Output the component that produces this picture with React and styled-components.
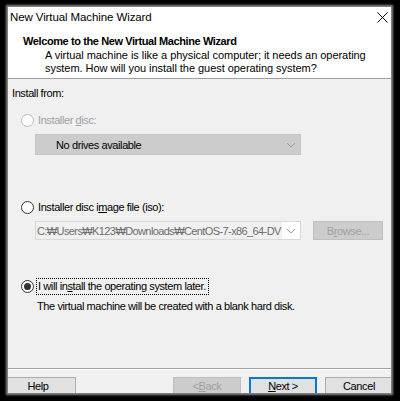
import styled, { createGlobalStyle } from 'styled-components';

const Global = createGlobalStyle`
	html, body {
		margin: 0;
		padding: 0;
		background: #000000;
	}
	body {
		width: 400px;
		height: 401px;
		overflow: hidden;
		font-family: 'Liberation Sans', Arial, sans-serif;
		font-size: 11px;
		letter-spacing: -0.4px;
		color: #000000;
	}
`;

const Window = styled.div`
	margin: 7px 0 0 8px;
	width: 383px;
	height: 386px;
	display: flex;
	flex-direction: column;
	background: #f0f0f0;
	box-shadow: 0 0 2px 2px #8a8a8a;
	overflow: hidden;
`;

const TitleBar = styled.div`
	height: 20px;
	flex: none;
	display: flex;
	align-items: center;
	justify-content: space-between;
	padding: 0 3px 0 2px;
	background: #ffffff;
	font-size: 11.5px;
	letter-spacing: -0.1px;
`;

const Header = styled.div`
	height: 52px;
	flex: none;
	padding: 8px 0 0 15px;
	box-sizing: border-box;
	background: #ffffff;
	border-bottom: 1px solid #a0a0a0;
`;

const HeaderTitle = styled.div`
	font-weight: bold;
	line-height: 13px;
	margin-bottom: 1px;
`;

const HeaderText = styled.div`
	padding-left: 22px;
	line-height: 13px;
	letter-spacing: -0.05px;
`;

const Body = styled.div`
	flex: 1;
	padding: 8px 0 0 4px;
	display: flex;
	flex-direction: column;
	border-bottom: 1px solid #a0a0a0;
`;

const Label = styled.div`
	line-height: 13px;
`;

const RadioRow = styled.div`
	display: flex;
	align-items: center;
	gap: 2px;
	padding-left: 9px;
	margin-top: ${p => p.top}px;
	height: 15px;
`;

const RadioCircle = styled.span`
	width: 11px;
	height: 11px;
	border-radius: 50%;
	border: 1px solid ${p => (p.disabled ? '#bcbcbc' : '#333333')};
	background: #ffffff;
	display: flex;
	align-items: center;
	justify-content: center;
	&::after {
		content: '';
		width: 7px;
		height: 7px;
		border-radius: 50%;
		background: ${p => (p.checked ? '#333333' : 'transparent')};
	}
`;

const RadioText = styled.span`
	line-height: 13px;
	padding: 1px 2px 1px 1px;
	border: 1px dotted ${p => (p.focused ? '#000000' : 'transparent')};
	color: ${p => (p.disabled ? '#a0a0a0' : '#000000')};
`;

const U = styled.span`
	text-decoration: underline;
`;

const FieldRow = styled.div`
	display: flex;
	gap: 12px;
	margin: ${p => p.top}px 0 0 23px;
`;

const Combo = styled.div`
	width: 266px;
	height: ${p => p.h}px;
	box-sizing: border-box;
	display: flex;
	align-items: center;
	background: ${p => (p.filled ? '#cccccc' : '#ffffff')};
	border: 1px solid ${p => (p.filled ? '#c4c4c4' : '#d9d9d9')};
`;

const ComboValue = styled.div`
	flex: 1;
	height: 100%;
	display: flex;
	align-items: center;
	overflow: hidden;
	white-space: nowrap;
	padding-left: ${p => p.pad}px;
	background: ${p => p.bg || 'transparent'};
	color: ${p => p.color};
	letter-spacing: ${p => (p.tight ? '-0.6px' : 'inherit')};
	box-sizing: border-box;
`;

const Chevron = styled.svg`
	width: 18px;
	height: 8px;
	flex: none;
`;

const Browse = styled.div`
	width: 70px;
	height: 19px;
	box-sizing: border-box;
	display: flex;
	align-items: center;
	justify-content: center;
	background: #cccccc;
	border: 1px solid #bfbfbf;
	color: #a0a0a0;
`;

const Note = styled.div`
	margin: 6px 0 0 25px;
	line-height: 13px;
`;

const Footer = styled.div`
	height: 24px;
	flex: none;
	box-sizing: border-box;
	padding-top: 7px;
	display: flex;
	border-top: 1px solid #ffffff;
`;

const Button = styled.div`
	width: ${p => p.w || 68}px;
	height: 23px;
	flex: none;
	box-sizing: border-box;
	margin-left: ${p => p.left || 0}px;
	display: flex;
	align-items: center;
	justify-content: center;
	padding-bottom: 6px;
	background: ${p => (p.disabled ? '#cccccc' : '#e1e1e1')};
	border: ${p => (p.primary ? '2px solid #0078d7' : p.disabled ? '1px solid #bfbfbf' : '1px solid #adadad')};
	color: ${p => (p.disabled ? '#a0a0a0' : '#000000')};
`;

const Close = () => (
	<svg width="11" height="11" viewBox="0 0 11 11">
		<path d="M0.5 0.5 L10.5 10.5 M10.5 0.5 L0.5 10.5" stroke="#000" strokeWidth="1" />
	</svg>
);

const Arrow = ({ color }) => (
	<Chevron viewBox="0 0 18 8">
		<path d="M5 2 L9 6 L13 2" stroke={color} strokeWidth="1" fill="none" />
	</Chevron>
);

const App = () => {
	return (
		<>
			<Global />
			<Window>
				<TitleBar>
					<span>New Virtual Machine Wizard</span>
					<Close />
				</TitleBar>
				<Header>
					<HeaderTitle>Welcome to the New Virtual Machine Wizard</HeaderTitle>
					<HeaderText>
						A virtual machine is like a physical computer; it needs an operating<br />
						system. How will you install the guest operating system?
					</HeaderText>
				</Header>
				<Body>
					<Label>Install from:</Label>
					<RadioRow top={13}>
						<RadioCircle disabled />
						<RadioText disabled>Installer <U>d</U>isc:</RadioText>
					</RadioRow>
					<FieldRow top={6}>
						<Combo h={21} filled>
							<ComboValue pad={20} color="#000000">No drives available</ComboValue>
							<Arrow color="#9a9a9a" />
						</Combo>
					</FieldRow>
					<RadioRow top={45}>
						<RadioCircle />
						<RadioText>Installer disc i<U>m</U>age file (iso):</RadioText>
					</RadioRow>
					<FieldRow top={6}>
						<Combo h={19}>
							<ComboValue pad={1} bg="#f0f0f0" color="#6d6d6d" tight>
								C:₩Users₩K123₩Downloads₩CentOS-7-x86_64-DV
							</ComboValue>
							<Arrow color="#9a9a9a" />
						</Combo>
						<Browse>B<U>r</U>owse...</Browse>
					</FieldRow>
					<RadioRow top={39}>
						<RadioCircle checked />
						<RadioText focused>I will in<U>s</U>tall the operating system later.</RadioText>
					</RadioRow>
					<Note>The virtual machine will be created with a blank hard disk.</Note>
				</Body>
				<Footer>
					<Button left={-8} w={76}>Help</Button>
					<Button left={97} disabled>{'< '}<U>B</U>ack</Button>
					<Button left={8} primary><U>N</U>ext &gt;</Button>
					<Button left={8}>Cancel</Button>
				</Footer>
			</Window>
		</>
	);
};

export default App;
